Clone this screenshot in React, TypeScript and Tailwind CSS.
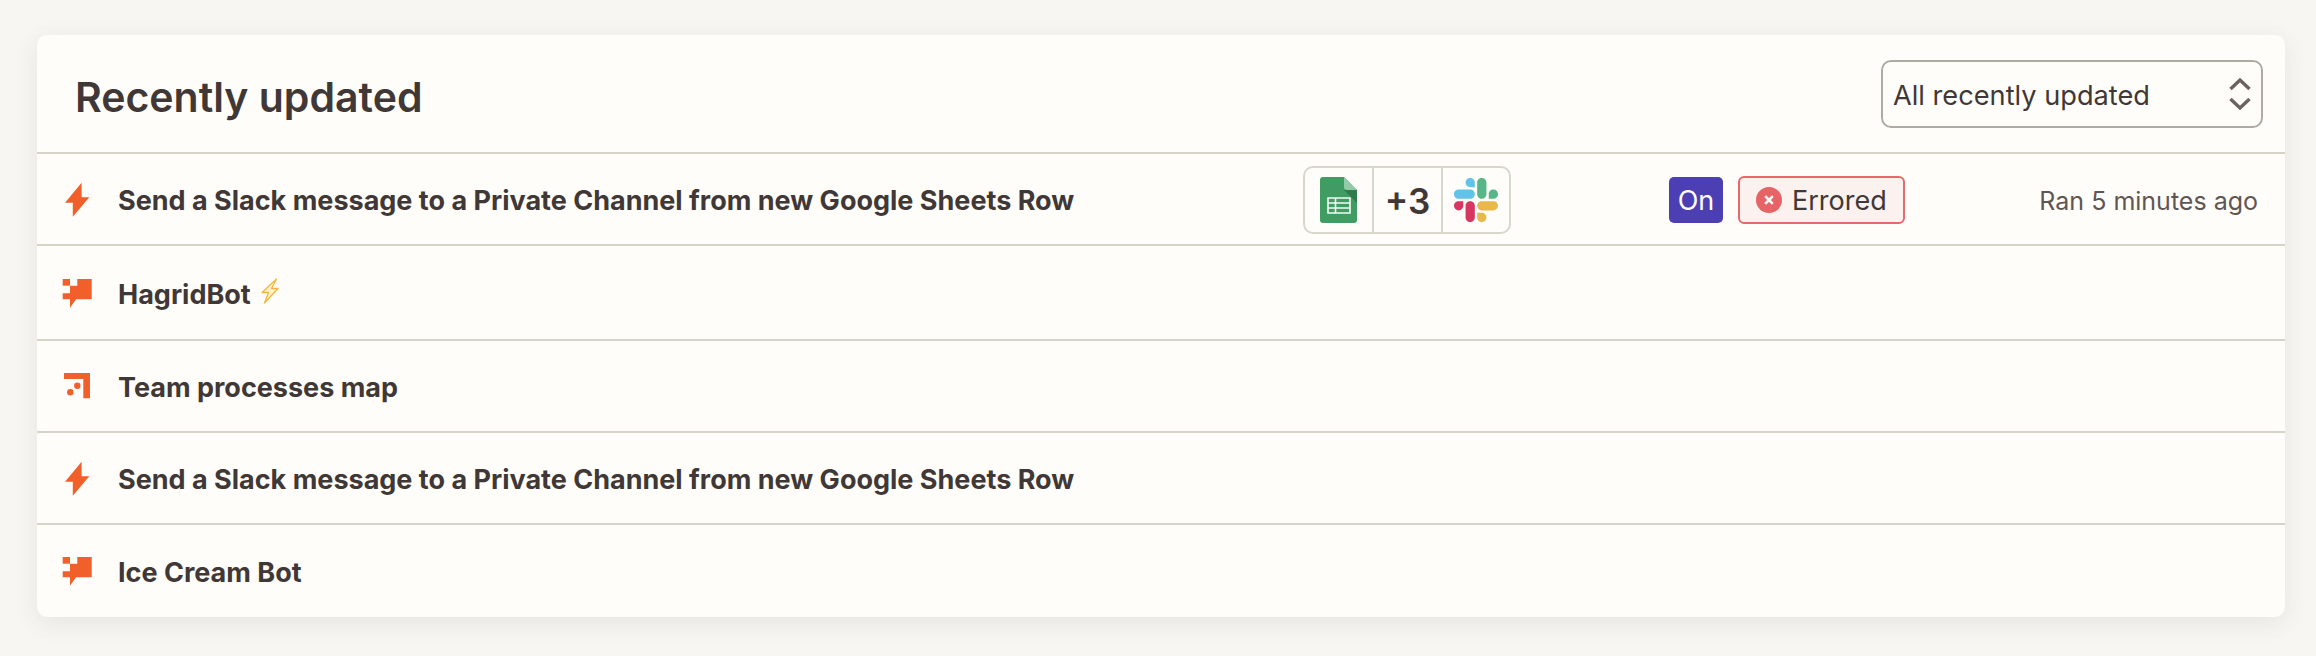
import React from 'react';

function ZapIcon() {
	return (
		<svg viewBox="0 0 36 36" className="w-9 h-9 shrink-0 translate-y-[1px]">
			<path d="M21.6 0.7 L5 20.7 H12.8 V34.7 L29.3 15.3 H21.6 Z" fill="#f15f2a" />
		</svg>
	);
}

function BotIcon() {
	return (
		<svg viewBox="0 0 36 36" className="w-9 h-9 shrink-0">
			<path d="M2.7 4 H10 V10.7 H2.7 Z" fill="#f15f2a" />
			<path
				d="M17.3 4 H31.7 V24.3 H16 L10 32.7 V24.3 H2.7 V18.3 H10 V10.7 H17.3 Z"
				fill="#f15f2a"
			/>
		</svg>
	);
}

function MapIcon() {
	return (
		<svg viewBox="0 0 36 36" className="w-9 h-9 shrink-0 translate-y-[1px]">
			<path d="M4 4 H30 V29.3 H23.3 V10 H4 Z" fill="#f15f2a" />
			<circle cx="17.3" cy="16.7" r="3.2" fill="#f15f2a" />
			<circle cx="10.3" cy="23.3" r="3.2" fill="#f15f2a" />
		</svg>
	);
}

function SheetsIcon() {
	return (
		<svg viewBox="0 0 37 46" className="w-[37px] h-[46px]">
			<path d="M3 0 H24 L37 13 V43 a3 3 0 0 1 -3 3 H3 a3 3 0 0 1 -3 -3 V3 a3 3 0 0 1 3 -3 Z" fill="#3f9d63" />
			<path d="M24 13 L37 26 V13 Z" fill="#2f7b4c" />
			<path d="M24 0 L37 13 H27 a3 3 0 0 1 -3 -3 Z" fill="#93cba9" />
			<path
				d="M8 21 H30 V36 H8 Z M8 26 H30 M8 31 H30 M15.5 21 V36"
				fill="none"
				stroke="#f4faf6"
				strokeWidth="1.6"
			/>
		</svg>
	);
}

function SlackIcon() {
	return (
		<svg viewBox="0 0 122.8 122.8" className="w-[44px] h-[44px]">
			<path
				d="M25.8 77.6c0 7.1-5.8 12.9-12.9 12.9S0 84.7 0 77.6s5.8-12.9 12.9-12.9h12.9v12.9zM32.3 77.6c0-7.1 5.8-12.9 12.9-12.9s12.9 5.8 12.9 12.9v32.3c0 7.1-5.8 12.9-12.9 12.9s-12.9-5.8-12.9-12.9V77.6z"
				fill="#d6365f"
			/>
			<path
				d="M45.2 25.8c-7.1 0-12.9-5.8-12.9-12.9S38.1 0 45.2 0s12.9 5.8 12.9 12.9v12.9H45.2zM45.2 32.3c7.1 0 12.9 5.8 12.9 12.9s-5.8 12.9-12.9 12.9H12.9C5.8 58.1 0 52.3 0 45.2s5.8-12.9 12.9-12.9h32.3z"
				fill="#62c2ea"
			/>
			<path
				d="M97 45.2c0-7.1 5.8-12.9 12.9-12.9s12.9 5.8 12.9 12.9-5.8 12.9-12.9 12.9H97V45.2zM90.5 45.2c0 7.1-5.8 12.9-12.9 12.9s-12.9-5.8-12.9-12.9V12.9C64.7 5.8 70.5 0 77.6 0s12.9 5.8 12.9 12.9v32.3z"
				fill="#56b687"
			/>
			<path
				d="M77.6 97c7.1 0 12.9 5.8 12.9 12.9s-5.8 12.9-12.9 12.9-12.9-5.8-12.9-12.9V97h12.9zM77.6 90.5c-7.1 0-12.9-5.8-12.9-12.9s5.8-12.9 12.9-12.9h32.3c7.1 0 12.9 5.8 12.9 12.9s-5.8 12.9-12.9 12.9H77.6z"
				fill="#e8b84c"
			/>
		</svg>
	);
}

function EmojiBolt() {
	return (
		<svg viewBox="0 0 18 26" className="w-[18px] h-[26px] ml-[10px] -translate-y-[2px]">
			<path
				d="M15.5 1 L1 14.5 H7.5 L3.5 25 L17 10.5 H10.5 Z"
				fill="#fff2c4"
				stroke="#f4b63f"
				strokeWidth="1.3"
				strokeLinejoin="round"
			/>
		</svg>
	);
}

const rows = [
	{ icon: <ZapIcon />, text: 'Send a Slack message to a Private Channel from new Google Sheets Row', h: 'h-[92px]', detail: true },
	{ icon: <BotIcon />, text: 'HagridBot', h: 'h-[95px]', emoji: true },
	{ icon: <MapIcon />, text: 'Team processes map', h: 'h-[92px]' },
	{ icon: <ZapIcon />, text: 'Send a Slack message to a Private Channel from new Google Sheets Row', h: 'h-[92px]' },
	{ icon: <BotIcon />, text: 'Ice Cream Bot', h: 'h-[94px]' },
];

function ZapDetail() {
	return (
		<div className="ml-auto flex translate-y-[1px] items-center">
			<div className="flex h-[68px] w-[208px] rounded-[10px] border-2 border-[#d9d7cc]">
				<div className="flex w-[69px] items-center justify-center border-r-2 border-[#d9d7cc]">
					<SheetsIcon />
				</div>
				<div className="flex w-[69px] items-center justify-center border-r-2 border-[#d9d7cc] pt-[3px] text-[35px] font-semibold">
					+3
				</div>
				<div className="flex flex-1 items-center justify-center">
					<SlackIcon />
				</div>
			</div>
			<div className="ml-[158px] flex items-center gap-[15px]">
				<div className="flex h-[46px] w-[54px] items-center justify-center rounded-[5px] bg-[#4c3fb4] pt-[3px] text-[27px] text-[#fffdf9]">
					On
				</div>
				<div className="flex h-[48px] w-[167px] items-center gap-[10px] rounded-[6px] border-2 border-[#e8696c] bg-[#fbf1ef] pl-[16px] text-[27px]">
					<svg viewBox="0 0 26 26" className="w-[26px] h-[26px] shrink-0">
						<circle cx="13" cy="13" r="13" fill="#e76466" />
						<path d="M9.2 9.2 L16.8 16.8 M16.8 9.2 L9.2 16.8" stroke="#fffdf9" strokeWidth="2.6" />
					</svg>
					<span className="pt-[3px]">Errored</span>
				</div>
			</div>
			<p className="w-[353px] pt-[3px] text-right text-[25px] text-[#5f5654]">Ran 5 minutes ago</p>
		</div>
	);
}

export default function App() {
	return (
		<div className="min-h-[656px] bg-[#f7f6f3] pt-[35px] pl-[37px] pr-[31px] text-[#403836] font-['Inter',sans-serif]">
			<div className="rounded-[10px] bg-[#fffdf9] shadow-[0_6px_24px_rgba(60,50,40,0.09)]">
				<header className="flex h-[117px] items-center justify-between pl-[38px] pr-[22px]">
					<h2 className="pt-[9px] text-[41px] font-semibold">Recently updated</h2>
					<div className="flex h-[68px] w-[382px] items-center justify-between rounded-[10px] border-2 border-[#aeaca2] pl-[10px] pr-[10px] text-[27.2px]">
						<span className="pt-[5px]">All recently updated</span>
						<svg viewBox="0 0 22 34" className="w-[22px] h-[34px]" fill="none" stroke="#6b6360" strokeWidth="3.4">
							<path d="M1.5 12 L11 3 L20.5 12 M1.5 22 L11 31 L20.5 22" />
						</svg>
					</div>
				</header>
				{rows.map((r, i) => (
					<div key={i} className={`flex items-center border-t-2 border-[#d6d4c9] pl-[23px] pr-[27px] ${r.h}`}>
						{r.icon}
						<p className="ml-[22px] pt-[5px] text-[27px] font-bold">{r.text}</p>
						{r.emoji && <EmojiBolt />}
						{r.detail && <ZapDetail />}
					</div>
				))}
			</div>
		</div>
	);
}
